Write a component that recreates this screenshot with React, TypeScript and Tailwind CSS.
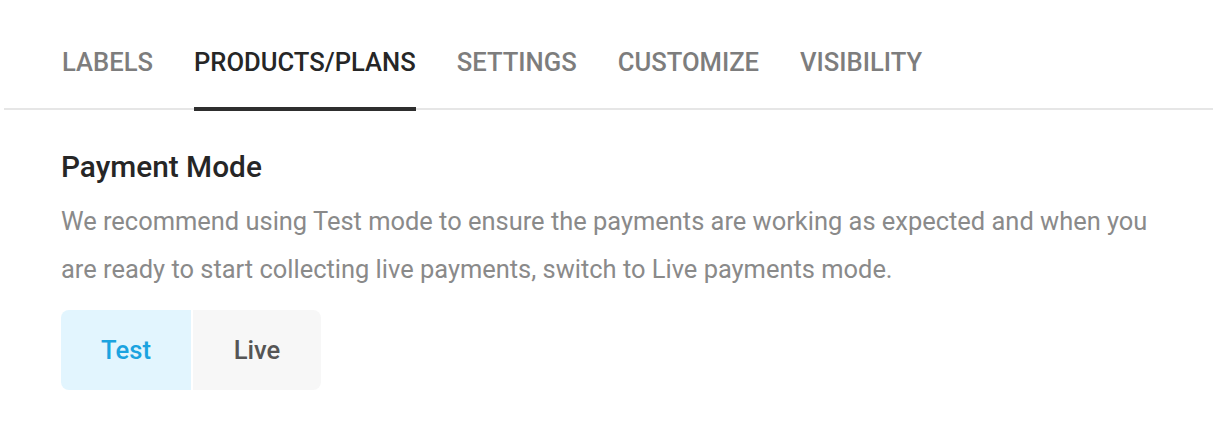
import React from "react";

const tabs = ["LABELS", "PRODUCTS/PLANS", "SETTINGS", "CUSTOMIZE", "VISIBILITY"];

export default function App() {
  return (
    <div className="w-[1220px] h-[439px] bg-white font-['Roboto',sans-serif]">
      <div className="ml-[4px] w-[1209px] h-[110px] border-b-2 border-[#e6e6e6] flex gap-[41px] pl-[58px]">
        {tabs.map((t) => {
          const active = t === "PRODUCTS/PLANS";
          return (
            <div
              key={t}
              className={
                "h-[111px] pt-[44px] text-[25.6px] leading-[36px] font-medium " +
                (active
                  ? "text-[#262626] border-b-4 border-[#2e2e2e]"
                  : "text-[#7d7d7d] border-b-4 border-transparent")
              }
            >
              {t}
            </div>
          );
        })}
      </div>
      <div className="pl-[61px] pt-[37px]">
        <h2 className="text-[29.8px] leading-[40px] font-medium text-[#262626]">Payment Mode</h2>
        <p className="mt-[10px] text-[25.45px] leading-[48px] text-[#8a8a8a] w-[1110px]">
          We recommend using Test mode to ensure the payments are working as expected and when you are ready to start collecting live payments, switch to Live payments mode.
        </p>
        <div className="mt-[17px] flex gap-[2px]">
          <div className="w-[130px] h-[80px] rounded-l-[8px] bg-[#e2f5fe] text-[#1ba3e0] text-[25.6px] font-medium flex items-center justify-center">
            Test
          </div>
          <div className="w-[128px] h-[80px] rounded-r-[8px] bg-[#f7f7f7] text-[#555555] text-[25.6px] font-medium flex items-center justify-center">
            Live
          </div>
        </div>
      </div>
    </div>
  );
}
